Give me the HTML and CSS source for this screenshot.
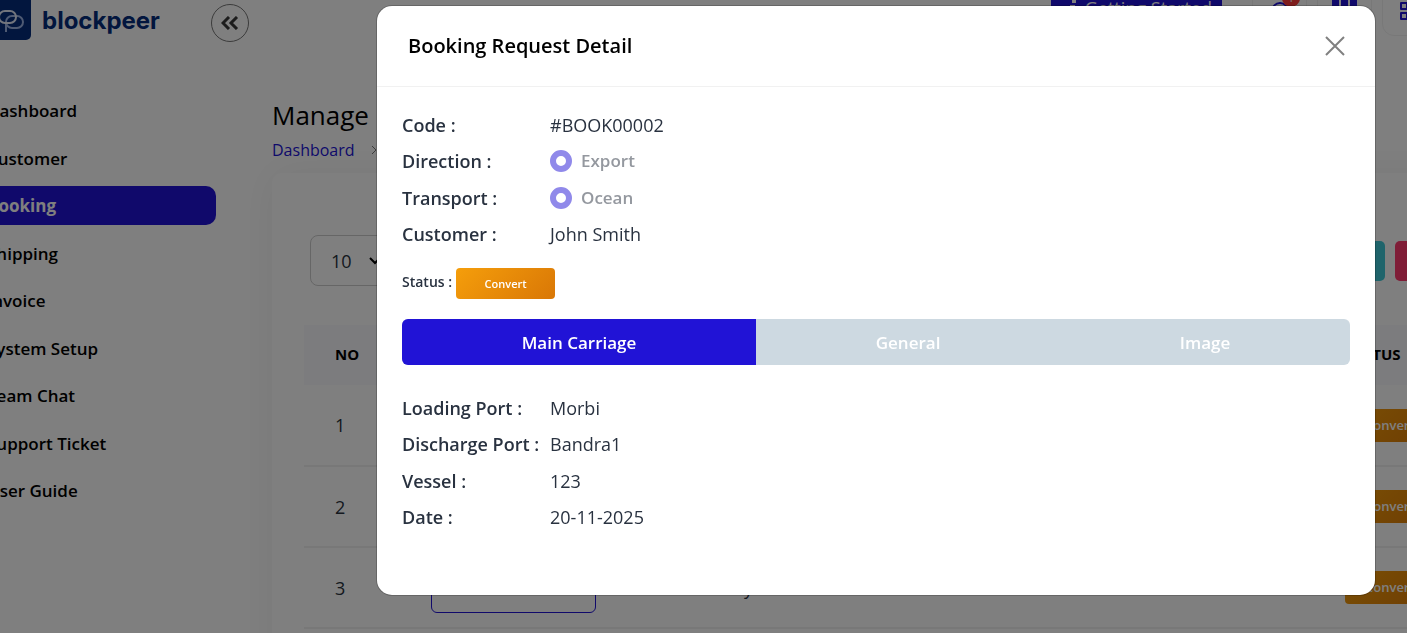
FILE: index.html
```html
<!DOCTYPE html>
<html lang="en">
<head>
    <meta charset="UTF-8">
    <meta name="viewport" content="width=device-width, initial-scale=1.0">
    <title>Manage Booking - blockpeer</title>
    <link rel="stylesheet" href="styles.css">
</head>
<body>
    <div class="app">
        <aside class="sidebar">
            <div class="brand">
                <a href="#" class="logo">
                    <svg width="42" height="40" viewBox="0 0 42 40" aria-hidden="true">
                        <rect y="-6" width="42" height="46" rx="5" fill="#042c7c"/>
                        <g fill="none" stroke-width="2">
                            <path d="M17 32V22a6 6 0 0 1 6-6h5a6 6 0 0 1 0 12h-5a6 6 0 0 1-6-6" stroke="#9db4e6"/>
                            <path d="M10 7v10a6 6 0 0 0 6 6h5a6 6 0 0 0 0-12h-5a6 6 0 0 0-6 6" stroke="#e4ebfa"/>
                        </g>
                    </svg>
                    <span>blockpeer</span>
                </a>
                <button class="collapse-btn" aria-label="Collapse menu">
                    <svg width="18" height="14" viewBox="0 0 18 14" fill="none" stroke="#3a3a3a" stroke-width="3">
                        <path d="M8 1L2 7l6 6M16 1l-6 6 6 6"/>
                    </svg>
                </button>
            </div>
            <nav class="menu">
                <a href="#">Dashboard</a>
                <a href="#">Customer</a>
                <a href="#" class="active">Booking</a>
                <a href="#">Shipping</a>
                <a href="#">Invoice</a>
                <a href="#">System Setup</a>
                <a href="#">Team Chat</a>
                <a href="#">Support Ticket</a>
                <a href="#">User Guide</a>
            </nav>
        </aside>

        <main class="content">
            <header class="topbar">
                <button class="start-btn">
                    <svg width="8" height="16" viewBox="0 0 8 16" fill="#fff"><path d="M3 0h4v3H3zM1 5h5v9h2v2H0v-2h2V7H1z"/></svg>
                    Getting Started
                </button>
                <button class="icon-btn" aria-label="Messages">
                    <svg width="20" height="24" viewBox="0 0 20 24" fill="none" stroke="#2113d6" stroke-width="2">
                        <path d="M2 10a8 8 0 0 1 16 0v6a6 6 0 0 1-6 6H8a6 6 0 0 1-6-6z"/>
                    </svg>
                    <span class="count">1</span>
                </button>
                <button class="icon-btn" aria-label="Apps">
                    <svg width="26" height="26" viewBox="0 0 26 26" fill="#2113d6">
                        <path d="M0 0h7v7H0zM9 0h7v7H9zM18 0h7v7h-7zM0 9h7v7H0zM9 9h7v7H9zM18 9h7v7h-7zM0 18h7v7H0zM9 18h7v7H9zM18 18h7v7h-7z"/>
                    </svg>
                </button>
                <button class="icon-btn" aria-label="Layout">
                    <svg width="20" height="24" viewBox="0 0 20 24" fill="none" stroke="#2113d6" stroke-width="2">
                        <path d="M1 2h6v6H1zM12 2h6v6h-6zM1 12h6v6H1zM12 12h6v6h-6z" stroke-linejoin="round"/>
                    </svg>
                </button>
            </header>

            <h1>Manage Booking</h1>
            <div class="breadcrumb">
                <a href="#">Dashboard</a>
                <svg width="6" height="10" viewBox="0 0 6 10" fill="none" stroke="#777"><path d="M1 1l4 4-4 4"/></svg>
                <span>Booking</span>
            </div>

            <section class="card">
                <div class="toolbar">
                    <select class="page-size" aria-label="Rows per page">
                        <option>10</option>
                        <option>25</option>
                    </select>
                    <div class="actions">
                        <button class="tool teal" aria-label="Export"></button>
                        <button class="tool pink" aria-label="Reset"></button>
                    </div>
                </div>
                <table>
                    <thead>
                        <tr><th class="col-no">No</th><th class="col-code">Code</th><th class="col-name">Customer</th><th>Status</th></tr>
                    </thead>
                    <tbody>
                        <tr><td>1</td><td><a href="#" class="code">#BOOK00003</a></td><td>Ray</td><td><span class="badge">Convert</span></td></tr>
                        <tr><td>2</td><td><a href="#" class="code">#BOOK00002</a></td><td>Ray</td><td><span class="badge">Convert</span></td></tr>
                        <tr><td>3</td><td><a href="#" class="code">#BOOK00001</a></td><td>Ray</td><td><span class="badge">Convert</span></td></tr>
                    </tbody>
                </table>
            </section>
        </main>
    </div>

    <div class="backdrop">
        <div class="modal" role="dialog" aria-labelledby="modal-title">
            <div class="modal-header">
                <h2 id="modal-title">Booking Request Detail</h2>
                <button class="close" aria-label="Close">
                    <svg width="20" height="20" viewBox="0 0 20 20" stroke="#808080" stroke-width="2"><path d="M1 1l18 18M19 1L1 19"/></svg>
                </button>
            </div>
            <div class="modal-body">
                <dl class="details">
                    <dt>Code :</dt>
                    <dd>#BOOK00002</dd>
                    <dt>Direction :</dt>
                    <dd><label class="radio"><input type="radio" name="direction" checked disabled> Export</label></dd>
                    <dt>Transport :</dt>
                    <dd><label class="radio"><input type="radio" name="transport" checked disabled> Ocean</label></dd>
                    <dt>Customer :</dt>
                    <dd>John Smith</dd>
                </dl>
                <div class="status">
                    <span>Status :</span>
                    <button class="convert">Convert</button>
                </div>
                <div class="tabs" role="tablist">
                    <button class="tab selected" role="tab" aria-selected="true">Main Carriage</button>
                    <button class="tab" role="tab" aria-selected="false">General</button>
                    <button class="tab" role="tab" aria-selected="false">Image</button>
                </div>
                <dl class="details">
                    <dt>Loading Port :</dt>
                    <dd>Morbi</dd>
                    <dt>Discharge Port :</dt>
                    <dd>Bandra1</dd>
                    <dt>Vessel :</dt>
                    <dd>123</dd>
                    <dt>Date :</dt>
                    <dd>20-11-2025</dd>
                </dl>
            </div>
        </div>
    </div>
</body>
</html>
```
FILE: styles.css
```css
* {
    box-sizing: border-box;
}

body {
    margin: 0;
    height: 100vh;
    overflow: hidden;
    background: #fff;
    color: #293240;
    font-family: "Open Sans", "Noto Sans", sans-serif;
    font-size: 18px;
}

a {
    text-decoration: none;
}

button {
    border: none;
    font-family: inherit;
    cursor: pointer;
}

.app {
    display: flex;
    height: 100vh;
    margin-left: -32px;
    overflow: hidden;
}

/* Sidebar */
.sidebar {
    flex: none;
    width: 304px;
    padding-right: 56px;
}

.brand {
    display: flex;
    align-items: flex-start;
    justify-content: space-between;
    height: 45px;
    padding-left: 21px;
}

.logo {
    display: flex;
    align-items: center;
    gap: 11px;
    height: 40px;
    color: #042c7c;
    font-family: Inter, sans-serif;
    font-size: 24px;
    font-weight: 700;
}

.collapse-btn {
    display: flex;
    align-items: center;
    justify-content: center;
    width: 38px;
    height: 38px;
    margin-top: 4px;
    margin-right: -33px;
    padding: 0;
    border: 1px solid #777;
    border-radius: 50%;
    background: none;
}

.menu {
    display: flex;
    flex-direction: column;
    justify-content: space-between;
    height: 419px;
    margin-top: 46px;
}

.menu a {
    height: 39px;
    padding-left: 19px;
    border-radius: 10px;
    color: #000;
    font-size: 17px;
    font-weight: 600;
    line-height: 40px;
}

.menu .active {
    background: #2113d6;
    color: #fff;
    font-weight: 700;
}

/* Page behind the modal */
.content {
    flex: 1;
    min-width: 0;
}

.topbar {
    display: flex;
    align-items: flex-start;
    justify-content: flex-end;
    gap: 10px;
    height: 37px;
    margin-right: -30px;
    margin-top: -19px;
}

.start-btn {
    display: flex;
    align-items: center;
    gap: 8px;
    height: 53px;
    margin-right: 20px;
    padding: 0 10px 0 18px;
    background: #2113d6;
    color: #fff;
    font-size: 18px;
}

.icon-btn {
    position: relative;
    display: flex;
    align-items: flex-end;
    justify-content: center;
    width: 55px;
    height: 55px;
    padding: 0 0 10px;
    border: 1px solid #f1f1f1;
    border-radius: 12px;
    background: #fff;
}

.count {
    position: absolute;
    top: 7px;
    right: 6px;
    width: 18px;
    height: 18px;
    border-radius: 50%;
    background: #ff3a3a;
    color: #fff;
    font-size: 12px;
    line-height: 18px;
}

h1 {
    margin: 79px 0 0;
    color: #000;
    font-size: 26px;
    font-weight: 500;
    line-height: 36px;
}

.breadcrumb {
    display: flex;
    align-items: center;
    gap: 16px;
    height: 34px;
    font-size: 16px;
}

.breadcrumb a {
    color: #2113d6;
}

.card {
    width: 1300px;
    min-height: 600px;
    margin-top: 6px;
    padding: 62px 32px 0;
    border-radius: 10px;
    box-shadow: 0 0 40px rgba(0, 0, 0, 0.06);
}

.toolbar {
    display: flex;
    justify-content: space-between;
    height: 90px;
    padding-left: 6px;
}

.page-size {
    width: 82px;
    height: 51px;
    padding: 0 20px;
    border: 1px solid #ccc;
    border-radius: 8px;
    background: #fff url("data:image/svg+xml,%3Csvg xmlns='http://www.w3.org/2000/svg' width='12' height='8' fill='none' stroke='black' stroke-width='2'%3E%3Cpath d='M1 1l5 5 5-5'/%3E%3C/svg%3E") no-repeat right 10px center;
    color: #293240;
    font: inherit;
    appearance: none;
}

.actions {
    display: flex;
    gap: 10px;
    padding-top: 6px;
    padding-right: 105px;
}

.tool {
    width: 40px;
    height: 40px;
    border-radius: 5px;
}

.teal {
    background: #3ec9d6;
}

.pink {
    background: #ff3a6e;
}

table {
    width: 100%;
    border-collapse: collapse;
    table-layout: fixed;
}

th {
    height: 60px;
    padding: 0 31px 3px;
    background: #f8f9fd;
    color: #000;
    font-size: 15px;
    text-align: left;
    text-transform: uppercase;
}

td {
    height: 81px;
    padding: 0 31px;
    border-bottom: 2px solid #f1f1f1;
    color: #293240;
}

.col-no {
    width: 96px;
}

.col-code {
    width: 292px;
}

.col-name {
    width: 622px;
}

.code {
    display: block;
    width: 165px;
    height: 50px;
    border: 1px solid #2113d6;
    border-radius: 6px;
    color: #2113d6;
    line-height: 44px;
    text-align: center;
}

.badge {
    display: block;
    width: 100px;
    height: 33px;
    padding-left: 20px;
    border-radius: 4px;
    background: linear-gradient(135deg, #f59e0b, #d97706);
    color: #fff;
    font-size: 13px;
    font-weight: 600;
    line-height: 33px;
}

/* Modal */
.backdrop {
    position: fixed;
    inset: 0;
    padding: 6px 32px 0 377px;
    background: rgba(0, 0, 0, 0.5);
}

.modal {
    padding-bottom: 60px;
    border-radius: 15px;
    background: #fff;
    box-shadow: 0 0 0 1px rgba(0, 0, 0, 0.2);
}

.modal-header {
    display: flex;
    align-items: center;
    justify-content: space-between;
    height: 81px;
    padding: 0 30px 1px 31px;
    border-bottom: 1px solid #f1f1f1;
}

.modal-header h2 {
    margin: 0;
    color: #000;
    font-size: 20px;
    font-weight: 600;
}

.close {
    display: flex;
    padding: 0;
    background: none;
}

.modal-body {
    padding: 20px 25px 0;
}

.details {
    display: grid;
    grid-template-columns: 148px 1fr;
    align-content: space-between;
    min-height: 145px;
    margin: 0;
    line-height: 36px;
}

.details dt {
    font-weight: 600;
}

.details dd {
    margin: 0;
}

.radio {
    display: flex;
    align-items: center;
    gap: 9px;
    color: #94989f;
    font-size: 17px;
    font-weight: 600;
}

.radio input {
    width: 22px;
    height: 22px;
    margin: 0;
    border: 6px solid #9089ea;
    border-radius: 50%;
    appearance: none;
}

.status {
    display: flex;
    align-items: center;
    gap: 4px;
    margin: 16px 0 20px;
    font-size: 14px;
    font-weight: 600;
}

.status span {
    padding-bottom: 4px;
}

.convert {
    width: 99px;
    height: 31px;
    padding-bottom: 2px;
    border-radius: 4px;
    background: linear-gradient(135deg, #f59e0b, #d97706);
    color: #fff;
    font-size: 11px;
    font-weight: 600;
}

.tabs {
    display: flex;
    height: 46px;
    margin-bottom: 25px;
    border-radius: 6px;
    background: #cdd9e1;
    overflow: hidden;
}

/* each tab grows from the width of its label */
.tab {
    flex: 1 1 auto;
    background: none;
    color: #fff;
    font-size: 17px;
    font-weight: 600;
}

.tab.selected {
    background: #2113d6;
}
```
